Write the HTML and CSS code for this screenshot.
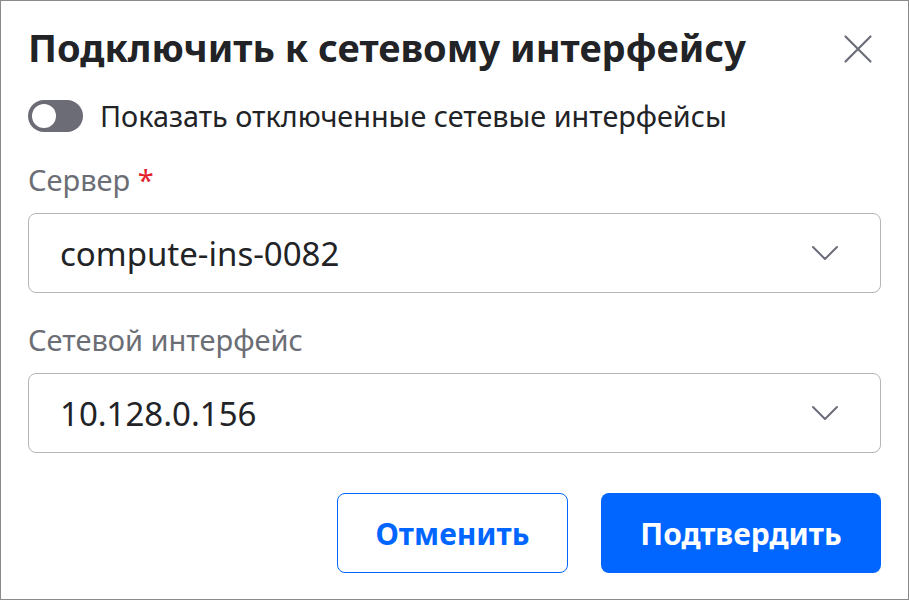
FILE: index.html
```html
<!DOCTYPE html>
<html lang="ru">
<head>
    <meta charset="UTF-8">
    <title>Подключить к сетевому интерфейсу</title>
    <link rel="stylesheet" href="styles.css">
</head>
<body>
    <div class="dialog">
        <div class="header">
            <h1 class="title">Подключить к сетевому интерфейсу</h1>
            <button class="close" aria-label="Закрыть">
                <svg width="30" height="30" viewBox="0 0 30 30">
                    <path d="M2.5 2.5 L27.5 27.5 M27.5 2.5 L2.5 27.5" stroke="#6b6e78" stroke-width="2.2" stroke-linecap="round" fill="none"/>
                </svg>
            </button>
        </div>

        <label class="toggle-row">
            <span class="toggle"><span class="knob"></span></span>
            <span class="toggle-text">Показать отключенные сетевые интерфейсы</span>
        </label>

        <div class="field field-server">
            <div class="field-label">Сервер <span class="required">*</span></div>
            <div class="select">
                <span class="select-value">compute-ins-0082</span>
                <svg class="chevron" width="28" height="16" viewBox="0 0 28 16">
                    <path d="M2 2 L14 14 L26 2" stroke="#6b6e78" stroke-width="2" stroke-linecap="round" stroke-linejoin="round" fill="none"/>
                </svg>
            </div>
        </div>

        <div class="field field-iface">
            <div class="field-label">Сетевой интерфейс</div>
            <div class="select">
                <span class="select-value">10.128.0.156</span>
                <svg class="chevron" width="28" height="16" viewBox="0 0 28 16">
                    <path d="M2 2 L14 14 L26 2" stroke="#6b6e78" stroke-width="2" stroke-linecap="round" stroke-linejoin="round" fill="none"/>
                </svg>
            </div>
        </div>

        <div class="actions">
            <button class="btn btn-cancel">Отменить</button>
            <button class="btn btn-confirm">Подтвердить</button>
        </div>
    </div>
</body>
</html>
```

FILE: styles.css
```css
html, body {
    margin: 0;
    padding: 0;
}
body {
    font-family: "Noto Sans", "DejaVu Sans", sans-serif;
    color: #222;
    background: #fff;
}
.dialog {
    box-sizing: border-box;
    width: 909px;
    height: 600px;
    border: 1px solid #8a8a8a;
    padding: 21px 27px 0 27px;
}
.header {
    display: flex;
    align-items: flex-start;
    justify-content: space-between;
}
.title {
    margin: 0;
    font-size: 38px;
    font-weight: 700;
    line-height: 50px;
    color: #222326;
}
.close {
    border: none;
    background: none;
    padding: 0;
    margin: 12px 8px 0 0;
    width: 30px;
    height: 30px;
    cursor: pointer;
}
.toggle-row {
    display: flex;
    align-items: center;
    gap: 17px;
    margin-top: 24px;
    height: 40px;
}
.toggle {
    width: 55px;
    height: 32px;
    border-radius: 16px;
    background: #6b6c75;
    position: relative;
    flex: none;
}
.knob {
    position: absolute;
    left: 4px;
    top: 4px;
    width: 24px;
    height: 24px;
    border-radius: 50%;
    background: #fff;
}
.toggle-text {
    font-size: 28.8px;
    line-height: 40px;
    color: #222326;
}
.field-server {
    margin-top: 26px;
}
.field-iface {
    margin-top: 29px;
}
.field-label {
    font-size: 29px;
    color: #6b6e75;
    line-height: 36px;
}
.required {
    color: #e5212b;
}
.select {
    margin-top: 15px;
    height: 80px;
    box-sizing: border-box;
    border: 1px solid #b5b5b8;
    border-radius: 8px;
    display: flex;
    align-items: center;
    justify-content: space-between;
    padding: 0 41px 0 31px;
}
.select-value {
    font-size: 33px;
    color: #222326;
}
.actions {
    display: flex;
    justify-content: flex-end;
    gap: 33px;
    margin-top: 40px;
}
.btn {
    height: 80px;
    border-radius: 8px;
    font-family: "Noto Sans", sans-serif;
    font-size: 30px;
    font-weight: 700;
    cursor: pointer;
}
.btn-cancel {
    width: 231px;
    background: #fff;
    color: #0066ff;
    border: 1px solid #0066ff;
}
.btn-confirm {
    width: 280px;
    background: #0066ff;
    color: #fff;
    border: none;
}
```
